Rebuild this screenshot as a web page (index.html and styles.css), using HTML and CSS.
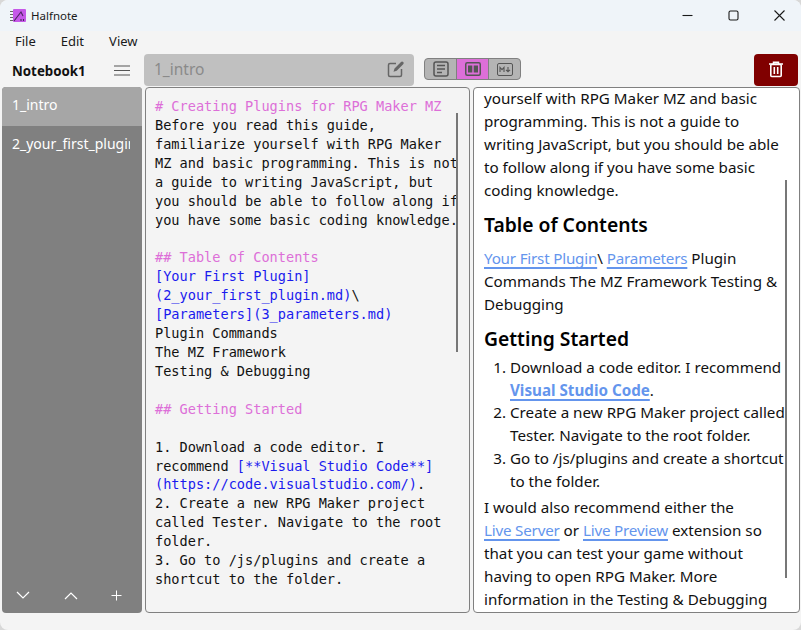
FILE: index.html
```html
<!DOCTYPE html>
<html lang="en">

<head>
    <meta charset="UTF-8">
    <title>Halfnote</title>
    <link rel="stylesheet" href="styles.css">
</head>

<body>
    <div class="window">
        <header class="titlebar">
            <svg class="app-icon" width="16" height="16" viewBox="0 0 16 16">
                <rect x="3" width="13" height="13" y="1" rx="1" fill="#c558e8" />
                <path d="M0 3.500h3M0 6.500h3M0 9.500h3M0 12.500h3" stroke="#666" />
                <path d="M4 13L11 4L13 8M11 13v-2M13.500 13v-2" fill="none" stroke="#4a2560" stroke-width="1.100" />
            </svg>
            <span class="app-name">Halfnote</span>
            <div class="win-controls">
                <svg width="11" height="11" viewBox="0 0 11 11"><path d="M0.500 5.500h10" stroke="#1a1a1a" stroke-width="1.100" /></svg>
                <svg width="11" height="11" viewBox="0 0 11 11"><rect x="1" y="1" width="9" height="9" rx="1.500" fill="none" stroke="#1a1a1a" stroke-width="1.100" /></svg>
                <svg width="11" height="11" viewBox="0 0 11 11"><path d="M0.500 0.500l10 10M10.500 0.500l-10 10" stroke="#1a1a1a" stroke-width="1.100" /></svg>
            </div>
        </header>

        <nav class="menubar">
            <span>File</span>
            <span>Edit</span>
            <span>View</span>
        </nav>

        <div class="toolbar">
            <div class="notebook-head">
                <span class="notebook-name">Notebook1</span>
                <svg width="16" height="11" viewBox="0 0 16 11"><path d="M0 1h16M0 5.500h16M0 10h16" stroke="#555" /></svg>
            </div>
            <div class="title-box">
                <span>1_intro</span>
                <svg width="18" height="18" viewBox="0 0 18 18">
                    <path d="M9 3.500H3a1.500 1.500 0 0 0-1.500 1.500v10A1.500 1.500 0 0 0 3 16.500h10a1.500 1.500 0 0 0 1.500-1.500V9" fill="none" stroke="#666" stroke-width="1.500" />
                    <path d="M6.500 11.800l1-3.300L14 2a1.500 1.500 0 0 1 2.200 0 1.500 1.500 0 0 1 0 2.200L9.700 10.800z" fill="#666" />
                </svg>
            </div>
            <div class="view-toggle">
                <button class="toggle-btn">
                    <svg width="16" height="16" viewBox="0 0 16 16">
                        <rect x="1" y="1" width="14" height="14" rx="2" fill="none" stroke="#555" stroke-width="1.500" />
                        <path d="M4 4.500h8M4 8h8M4 11.500h5" stroke="#555" stroke-width="1.300" />
                    </svg>
                </button>
                <button class="toggle-btn active">
                    <svg width="16" height="14" viewBox="0 0 16 14">
                        <rect x="0.750" y="0.750" width="14.500" height="12.500" rx="1.500" fill="none" stroke="#555" stroke-width="1.500" />
                        <rect x="3" y="3.500" width="4.300" height="7" fill="#555" />
                        <rect x="8.700" y="3.500" width="4.300" height="7" fill="#555" />
                    </svg>
                </button>
                <button class="toggle-btn">
                    <svg width="16" height="13" viewBox="0 0 16 13">
                        <rect x="0.500" y="0.500" width="15" height="12" rx="1.500" fill="none" stroke="#555" />
                        <path d="M3 9V4.500l2 2.200 2-2.200V9M11 4v4.500M9 6.800l2 2 2-2" fill="none" stroke="#555" stroke-width="1.100" />
                    </svg>
                </button>
            </div>
            <button class="delete-btn">
                <svg width="14" height="17" viewBox="0 0 14 16">
                    <path d="M0 2.500h14M4.500 2V0.800h5V2" fill="none" stroke="#fff" stroke-width="1.500" />
                    <rect x="1.800" y="3" width="10.400" height="12" rx="1" fill="none" stroke="#fff" stroke-width="1.600" />
                    <path d="M5.300 5.500v7M8.700 5.500v7" stroke="#fff" stroke-width="1.600" />
                </svg>
            </button>
        </div>

        <main class="workspace">
            <aside class="sidebar">
                <ul class="page-list">
                    <li class="page selected"><span class="page-name">1_intro</span></li>
                    <li class="page"><span class="page-name">2_your_first_plugin</span></li>
                </ul>
                <div class="sidebar-actions">
                    <svg width="14" height="9" viewBox="0 0 14 9"><path d="M1 1l6 6 6-6" fill="none" stroke="#fff" stroke-width="1.200" /></svg>
                    <svg width="14" height="9" viewBox="0 0 14 9"><path d="M1 8l6-6 6 6" fill="none" stroke="#fff" stroke-width="1.200" /></svg>
                    <svg width="11" height="11" viewBox="0 0 11 11"><path d="M5.500 0.500v10M0.500 5.500h10" stroke="#fff" /></svg>
                </div>
            </aside>

            <section class="editor">
<pre class="source"><span class="md-head"># Creating Plugins for RPG Maker MZ</span>
Before you read this guide,
familiarize yourself with RPG Maker
MZ and basic programming. This is not
a guide to writing JavaScript, but
you should be able to follow along if
you have some basic coding knowledge.

<span class="md-head">## Table of Contents</span>
<span class="md-link">[Your First Plugin]</span>
<span class="md-link">(2_your_first_plugin.md)</span>\
<span class="md-link">[Parameters](3_parameters.md)</span>
Plugin Commands
The MZ Framework
Testing &amp; Debugging

<span class="md-head">## Getting Started</span>

1. Download a code editor. I
recommend <span class="md-link">[**Visual Studio Code**]</span>
<span class="md-link">(https://code.visualstudio.com/)</span>.
2. Create a new RPG Maker project
called Tester. Navigate to the root
folder.
3. Go to /js/plugins and create a
shortcut to the folder.</pre>
                <div class="scrollbar editor-bar"></div>
            </section>

            <section class="preview">
                <p>yourself with RPG Maker MZ and basic<br>programming. This is not a guide to<br>writing JavaScript, but you should be able<br>to follow along if you have some basic<br>coding knowledge.</p>
                <h2>Table of Contents</h2>
                <p><a>Your First Plugin</a>\ <a>Parameters</a> Plugin<br>Commands The MZ Framework Testing &amp;<br>Debugging</p>
                <h2>Getting Started</h2>
                <ol>
                    <li>Download a code editor. I recommend<br><a><strong>Visual Studio Code</strong></a>.</li>
                    <li>Create a new RPG Maker project called<br>Tester. Navigate to the root folder.</li>
                    <li>Go to /js/plugins and create a shortcut<br>to the folder.</li>
                </ol>
                <p>I would also recommend either the<br><a>Live Server</a> or <a>Live Preview</a> extension so<br>that you can test your game without<br>having to open RPG Maker. More<br>information in the Testing &amp; Debugging</p>
                <div class="scrollbar preview-bar"></div>
            </section>
        </main>
    </div>
</body>

</html>
```

FILE: styles.css
```css
* {
    margin: 0;
    padding: 0;
    box-sizing: border-box;
}

body {
    background-color: #d8d8d8;
    font-family: "Noto Sans", "Open Sans", sans-serif;
    overflow: hidden;
}

.window {
    width: 801px;
    height: 630px;
    background-color: #f4f4f4;
    border-radius: 8px;
    overflow: hidden;
    display: flex;
    flex-direction: column;
}

.titlebar {
    height: 31px;
    background-color: #eff4f9;
    display: flex;
    align-items: center;
    padding-left: 10px;
    flex-shrink: 0;
}

.app-icon {
    margin-right: 5px;
}

.app-name {
    font-size: 11.500px;
    color: #1a1a1a;
}

.win-controls {
    margin-left: auto;
    display: flex;
    gap: 35px;
    padding-right: 16px;
}

.menubar {
    height: 23px;
    display: flex;
    align-items: center;
    gap: 25px;
    padding: 0 0 3px 15px;
    font-size: 13px;
    color: #1a1a1a;
    flex-shrink: 0;
}

.toolbar {
    height: 33px;
    display: flex;
    align-items: center;
    flex-shrink: 0;
}

.notebook-head {
    width: 144px;
    height: 100%;
    display: flex;
    align-items: center;
    justify-content: space-between;
    padding: 0 14px 0 12px;
}

.notebook-name {
    font-size: 13.300px;
    font-weight: 700;
    color: #111;
}

.title-box {
    width: 270px;
    height: 32px;
    background-color: #c0c0c0;
    border-radius: 4px;
    display: flex;
    align-items: center;
    justify-content: space-between;
    padding: 0 9px 2px 10px;
    font-size: 15.500px;
    color: #8a8a8a;
    margin-bottom: 1px;
}

.view-toggle {
    margin-left: 10px;
    width: 97px;
    height: 22px;
    display: flex;
    background-color: #b4b4b4;
    border: 1px solid #808080;
    border-radius: 4px;
    overflow: hidden;
    margin-bottom: 3px;
}

.toggle-btn {
    flex: 1;
    border: none;
    background: none;
    display: flex;
    align-items: center;
    justify-content: center;
}

.toggle-btn.active {
    background-color: #dd6fd8;
    border-left: 1px solid #808080;
    border-right: 1px solid #808080;
}

.delete-btn {
    margin-left: auto;
    margin-right: 3px;
    width: 44px;
    height: 32px;
    background-color: #800000;
    border: none;
    border-radius: 4px;
    display: flex;
    align-items: center;
    justify-content: center;
    margin-bottom: 2px;
}

.workspace {
    height: 526px;
    display: flex;
    gap: 3px;
    padding-left: 2px;
    flex-shrink: 0;
}

.sidebar {
    width: 140px;
    background-color: #808080;
    border-radius: 4px;
    overflow: hidden;
    display: flex;
    flex-direction: column;
    justify-content: space-between;
}

.page-list {
    list-style: none;
}

.page {
    height: 39px;
    line-height: 36px;
    padding-left: 10px;
    font-size: 14px;
    color: #fff;
}

.page-name {
    display: block;
    width: 118px;
    white-space: nowrap;
    overflow: hidden;
}

.page.selected {
    background-color: #a6a6a6;
}

.sidebar-actions {
    height: 36px;
    display: flex;
    align-items: center;
    justify-content: space-between;
    padding: 0 20px 0 14px;
}

.editor {
    position: relative;
    width: 325px;
    background-color: #f4f4f4;
    border: 1px solid #808080;
    border-radius: 4px;
    overflow: hidden;
}

.source {
    padding: 9px 0 0 9px;
    font-family: "DejaVu Sans Mono", monospace;
    font-size: 13.600px;
    line-height: 18.920px;
    color: #111;
    overflow: hidden;
}

.md-head {
    color: #dd6fd8;
}

.md-link {
    color: #1a1aee;
}

.preview {
    position: relative;
    width: 327px;
    background-color: #fff;
    border: 1px solid #808080;
    border-radius: 4px;
    overflow: hidden;
    padding-left: 10px;
    font-size: 15.200px;
    line-height: 22.900px;
    color: #111;
    white-space: nowrap;
}

.preview p {
    margin-bottom: 10.600px;
}

.preview p:first-child {
    margin-top: -1px;
}

.preview h2 {
    font-size: 19.300px;
    font-weight: 600;
    line-height: 26px;
    color: #000;
    margin-bottom: 8.600px;
}

.preview a {
    color: #6495ed;
    letter-spacing: -0.200px;
    text-decoration: underline 2px;
    text-underline-offset: 3px;
    text-decoration-skip-ink: none;
}

.preview a strong {
    letter-spacing: 0;
}

.preview ol {
    padding-left: 26px;
    margin-top: -5px;
    margin-bottom: 3px;
}

.scrollbar {
    position: absolute;
    width: 2px;
    background-color: #777;
}

.editor-bar {
    top: 25px;
    left: 310px;
    height: 239px;
}

.preview-bar {
    top: 92px;
    left: 311px;
    height: 398px;
}
```
